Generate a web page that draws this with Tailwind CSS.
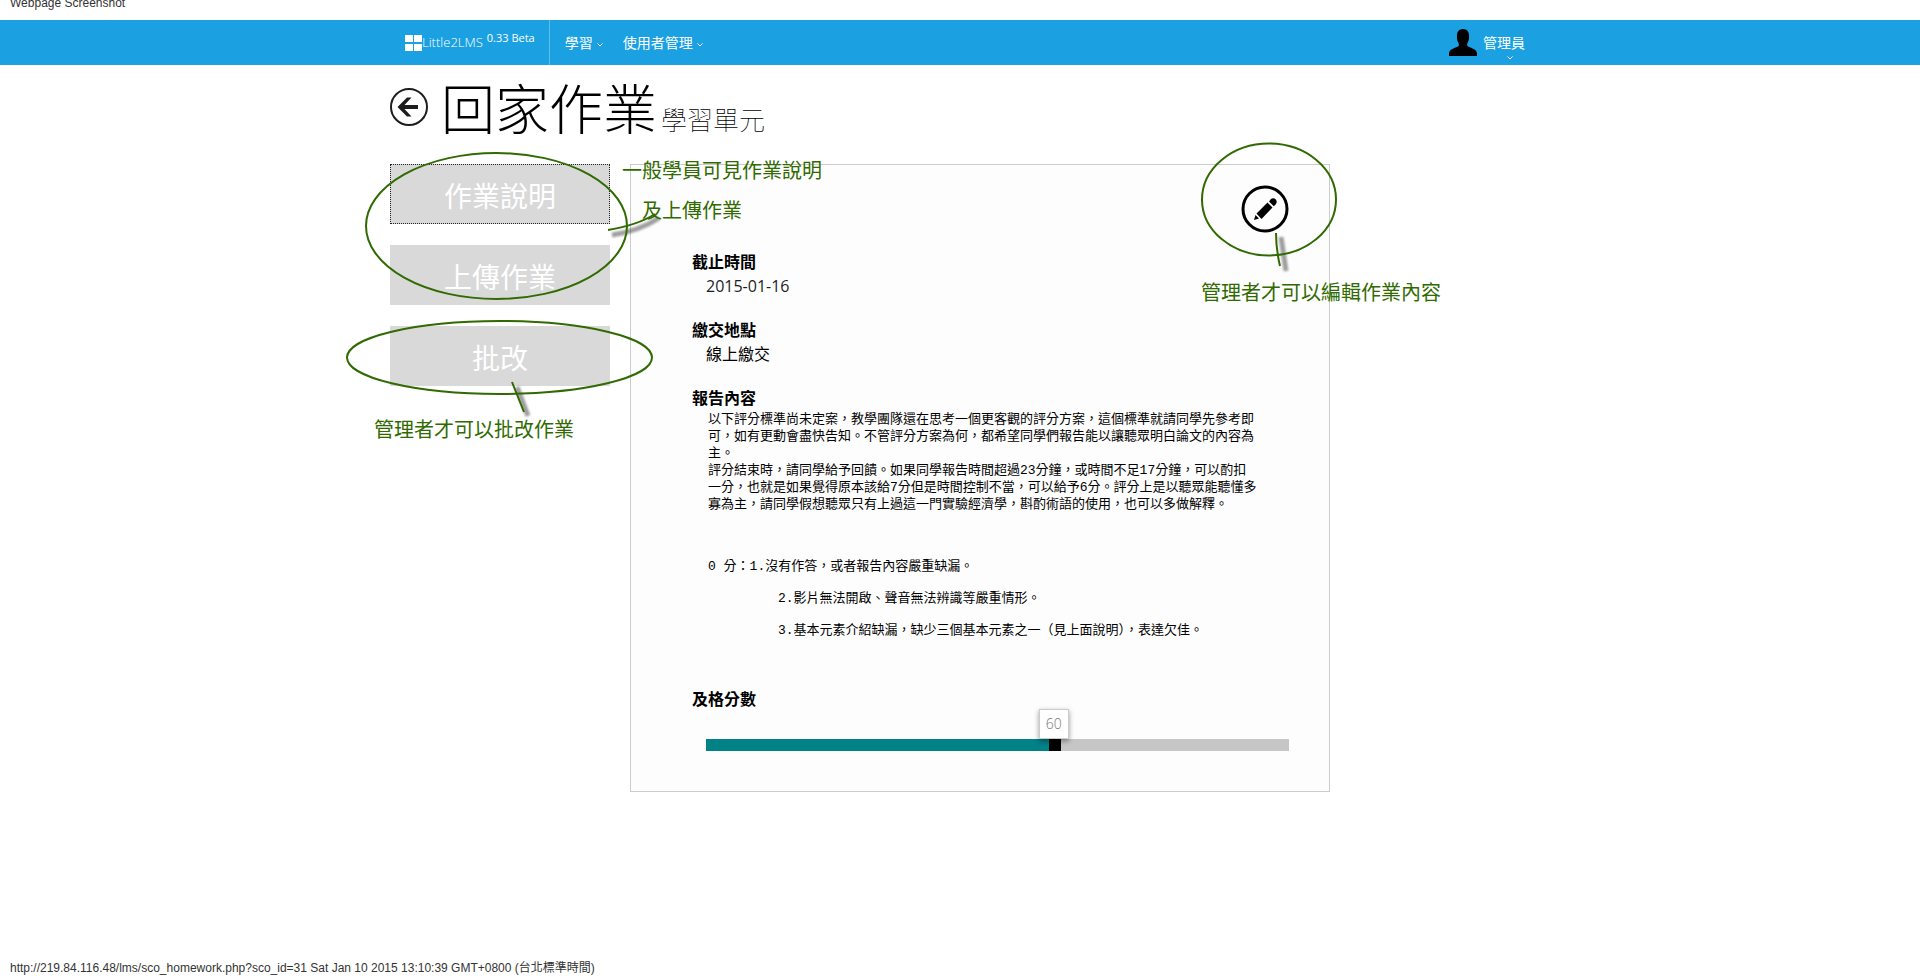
<!DOCTYPE html>
<html lang="zh-Hant">
<head>
<meta charset="utf-8">
<meta name="viewport" content="width=device-width, initial-scale=1">
<title>Little2LMS - 回家作業</title>
<script src="https://cdn.jsdelivr.net/npm/@tailwindcss/browser@4"></script>
</head>
<body class="flex min-h-screen flex-col overflow-x-hidden bg-white font-['Open_Sans','Noto_Sans_CJK_TC',sans-serif] text-black">
  <div class="h-5 overflow-hidden px-[10px] font-['Liberation_Sans',sans-serif] text-xs leading-[6px] text-[#333]">Webpage Screenshot</div>

  <header class="bg-[#1ba1e2] text-white">
    <nav class="mx-auto flex h-[45px] w-full max-w-[1140px] items-stretch text-sm">
      <a href="#" class="flex items-center border-r border-white/30 pr-[14px] pl-[15px] text-[13px]">
        <svg class="h-4 w-[17px]" viewBox="0 0 17 16" fill="#fff" aria-hidden="true"><path d="M0 0h8v7H0zM9 0h8v7H9zM0 9h8v7H0zM9 9h8v7H9z"/></svg>
        <span class="font-light">Little2LMS</span><span class="ml-1 pb-[10px] text-[11px]">0.33 Beta</span>
      </a>
      <a href="#" class="ml-[15px] flex items-center gap-1">學習
        <svg class="mt-1 h-1 w-1.5" viewBox="0 0 6 4" fill="none" stroke="#fff" aria-hidden="true"><path d="M.5.5 3 3 5.5.5"/></svg>
      </a>
      <a href="#" class="ml-5 flex items-center gap-1">使用者管理
        <svg class="mt-1 h-1 w-1.5" viewBox="0 0 6 4" fill="none" stroke="#fff" aria-hidden="true"><path d="M.5.5 3 3 5.5.5"/></svg>
      </a>
      <a href="#" class="mr-[5px] ml-auto flex items-center gap-1.5">
        <svg class="h-7 w-7" viewBox="0 0 28 28" aria-hidden="true"><path d="M14 0c4 0 6.3 2.800 6 7 .3 3-.3 5-1.800 7.500V17c4 2.500 9.800 2.800 9.800 7.500V27H0v-2.500C0 19.800 5.800 19.500 9.800 17v-2.500C8.300 12 7.700 10 8 7c-.3-4.200 2-7 6-7z"/></svg>
        <span class="flex flex-col items-center pt-2"><span class="leading-[18px]">管理員</span>
        <svg class="mt-1 ml-3 h-1 w-1.5" viewBox="0 0 6 4" fill="none" stroke="#fff" aria-hidden="true"><path d="M.5.5 3 3 5.5.5"/></svg></span>
      </a>
    </nav>
  </header>

  <main class="relative mx-auto w-full max-w-[1140px] grow">
    <div class="flex h-[99px] items-start">
      <a href="#" aria-label="返回" class="mt-[23px]">
        <svg class="h-[38px] w-[38px]" viewBox="0 0 38 38" fill="none" aria-hidden="true"><circle cx="19" cy="19" r="18" stroke="#1d1d1d" stroke-width="2"/><path d="M7.500 19 17 9.500h4.500L14.500 17H28v4H14.500l7 7.500H17z" fill="#1d1d1d"/></svg>
      </a>
      <h1 class="ml-[13px] flex items-baseline gap-1 pt-[14px] text-[54px] leading-[60px] font-light">回家作業<small class="text-[26px] font-thin">學習單元</small></h1>
    </div>

    <div class="flex items-start gap-5 pr-[200px]">
      <div class="flex w-[220px] shrink-0 flex-col gap-[21px] text-[28px] leading-10 text-white">
        <button type="button" class="h-[60px] border border-dotted border-[#222] bg-[#d9d9d9] pt-1">作業說明</button>
        <button type="button" class="h-[60px] bg-[#d9d9d9] pt-1">上傳作業</button>
        <button type="button" class="h-[60px] bg-[#d9d9d9] pt-1">批改</button>
      </div>

      <section class="min-w-0 grow border border-[#ccc] bg-[#fdfdfd] px-10 pt-5 pb-10">
        <div class="flex justify-end">
          <button type="button" aria-label="編輯">
            <svg class="h-12 w-12" viewBox="0 0 48 48" aria-hidden="true"><circle cx="24" cy="24" r="22" fill="none" stroke="#000" stroke-width="3"/><path d="m13 35 1.500-5 3.500 3.500zM15.500 28.500 26.500 17.500l5 5-11 11.500zM28 16.500l2-2.500c3-2.500 7.500 1.500 5 5l-2.200 2.300z"/></svg>
          </button>
        </div>
        <div class="mt-[17px] pl-[21px]">
          <h2 class="text-base leading-6 font-bold">截止時間</h2>
          <p class="pl-[14px] text-base leading-6 text-[#1d1d1d]">2015-01-16</p>
          <h2 class="mt-5 text-base leading-6 font-bold">繳交地點</h2>
          <p class="pl-[14px] text-base leading-6">線上繳交</p>
          <h2 class="mt-5 text-base leading-6 font-bold">報告內容</h2>
          <div class="pt-px pl-4 font-['Liberation_Mono','Noto_Sans_CJK_TC',monospace] text-[13px] leading-[17px] whitespace-nowrap">
            <p>以下評分標準尚未定案，教學團隊還在思考一個更客觀的評分方案，這個標準就請同學先參考即<br>可，如有更動會盡快告知。不管評分方案為何，都希望同學們報告能以讓聽眾明白論文的內容為<br>主。</p>
            <p>評分結束時，請同學給予回饋。如果同學報告時間超過23分鐘，或時間不足17分鐘，可以酌扣<br>一分，也就是如果覺得原本該給7分但是時間控制不當，可以給予6分。評分上是以聽眾能聽懂多<br>寡為主，請同學假想聽眾只有上過這一門實驗經濟學，斟酌術語的使用，也可以多做解釋。</p>
            <p class="mt-[45px]">0 分：1.沒有作答，或者報告內容嚴重缺漏。</p>
            <p class="mt-[15px] pl-[70px]">2.影片無法開啟、聲音無法辨識等嚴重情形。</p>
            <p class="mt-[15px] pl-[70px]">3.基本元素介紹缺漏，缺少三個基本元素之一（見上面說明），表達欠佳。</p>
          </div>
          <h2 class="mt-12 text-base leading-6 font-bold"><label for="score">及格分數</label></h2>
          <div class="relative mt-7 ml-[14px] flex">
            <input id="score" type="range" min="0" max="100" value="60" class="m-0 h-3 w-full appearance-none bg-[#c6c6c6] [&::-webkit-slider-thumb]:h-3 [&::-webkit-slider-thumb]:w-3 [&::-webkit-slider-thumb]:appearance-none [&::-webkit-slider-thumb]:bg-black" style="background-image:linear-gradient(to right,#008287 60%,transparent 60%)">
            <output for="score" class="absolute bottom-3 flex h-[30px] w-[30px] -translate-x-1/2 items-center justify-center border border-[#ccc] bg-white text-sm font-light text-[#777] shadow-[0_2px_5px_rgba(0,0,0,0.4)]" style="left:calc(60% - 2px)">60</output>
          </div>
        </div>
      </section>
    </div>

    <!-- Hand-drawn notes laid over the page -->
    <svg class="pointer-events-none absolute top-0 left-0 h-px w-px overflow-visible" fill="none" aria-hidden="true">
      <defs><filter id="soft" filterUnits="userSpaceOnUse" x="-60" y="0" width="1200" height="500"><feGaussianBlur stdDeviation="1"/></filter></defs>
      <g stroke="#000" stroke-opacity=".38" stroke-width="5" filter="url(#soft)">
        <path d="M222 170q27-4 47-17M127 322l11 29M891 172l5 34"/>
      </g>
      <g stroke="#306a00" stroke-width="2">
        <ellipse cx="106.500" cy="161" rx="130.500" ry="73"/>
        <ellipse cx="109.500" cy="292.500" rx="152.500" ry="36.500"/>
        <ellipse cx="879" cy="134.500" rx="67" ry="56"/>
        <path d="M218 165q30-5 47-16M122 317l12 30M886 168q0 16 4 33"/>
      </g>
    </svg>
    <div class="pointer-events-none text-xl leading-10 whitespace-nowrap text-[#306a00]">
      <p class="absolute top-[86px] left-[232px]">一般學員可見作業說明<br><span class="pl-5">及上傳作業</span></p>
      <p class="absolute top-[208px] left-[811px]">管理者才可以編輯作業內容</p>
      <p class="absolute top-[345px] -left-4">管理者才可以批改作業</p>
    </div>
  </main>

  <footer class="px-[10px] font-['Liberation_Sans','Noto_Sans_CJK_TC',sans-serif] text-xs leading-[15px] text-[#333]">http://219.84.116.48/lms/sco_homework.php?sco_id=31 Sat Jan 10 2015 13:10:39 GMT+0800 (台北標準時間)</footer>
</body>
</html>
